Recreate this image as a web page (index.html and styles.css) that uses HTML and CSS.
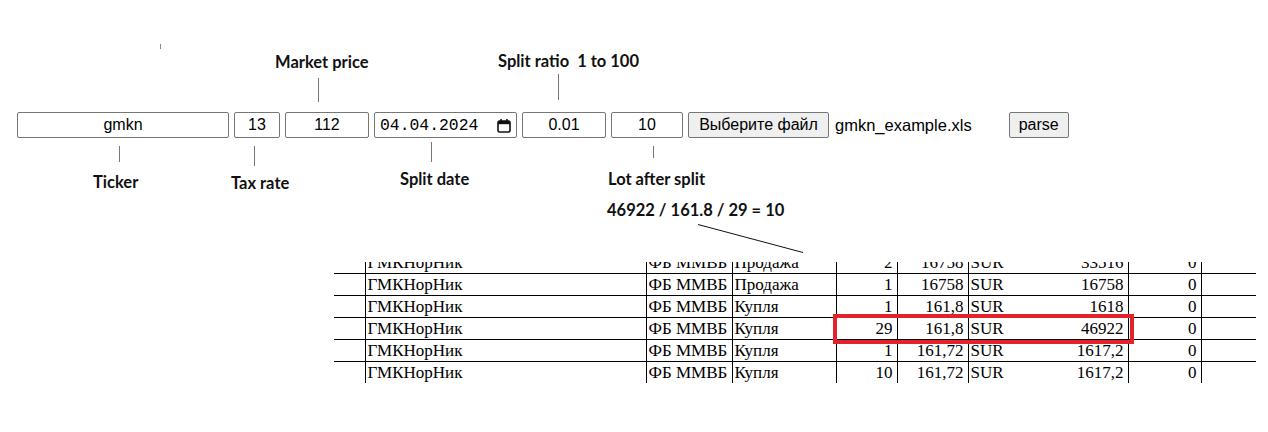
FILE: index.html
```html
<!DOCTYPE html>
<html>
<head>
<meta charset="utf-8">
<link rel="stylesheet" href="styles.css">
</head>
<body>
<div class="canvas">
  <div class="tick"></div>

  <div class="note note-market">Market price</div>
  <div class="vline vl-market"></div>
  <div class="note note-ratio">Split ratio&nbsp; 1 to 100</div>
  <div class="vline vl-ratio"></div>

  <form class="controls">
    <input class="field f-ticker" type="text" value="gmkn">
    <input class="field f-tax" type="text" value="13">
    <input class="field f-price" type="text" value="112">
    <div class="field f-date">
      <span class="date-text">04.04.2024</span>
      <svg class="cal" width="14" height="15" viewBox="0 0 14 15"><rect x="1" y="3" width="12" height="11" rx="1.5" fill="none" stroke="#111" stroke-width="1.6"/><rect x="1" y="3" width="12" height="3.2" fill="#111"/><rect x="3.3" y="1" width="1.6" height="3" fill="#111"/><rect x="9.1" y="1" width="1.6" height="3" fill="#111"/></svg>
    </div>
    <input class="field f-ratio" type="text" value="0.01">
    <input class="field f-lot" type="text" value="10">
    <div class="file">
      <button type="button" class="btn">Выберите файл</button>
      <span class="file-name">gmkn_example.xls</span>
    </div>
    <button type="button" class="btn btn-parse">parse</button>
  </form>

  <div class="vline vl-ticker"></div>
  <div class="vline vl-tax"></div>
  <div class="vline vl-date"></div>
  <div class="vline vl-lot"></div>

  <div class="note note-ticker">Ticker</div>
  <div class="note note-tax">Tax rate</div>
  <div class="note note-date">Split date</div>
  <div class="note note-lot">Lot after split</div>
  <div class="note note-formula">46922 / 161.8 / 29 = 10</div>

  <svg class="pointer" width="1268" height="432" viewBox="0 0 1268 432"><line x1="698" y1="224.5" x2="803" y2="252.5" stroke="#111" stroke-width="1"/></svg>

  <div class="sheet">
    <table class="deals">
      <colgroup>
        <col class="c1"><col class="c2"><col class="c3"><col class="c4"><col class="c5"><col class="c6"><col class="c7"><col class="c8"><col class="c9"><col class="c10">
      </colgroup>
      <tbody>
        <tr><td class="first"></td><td>ГМКНорНик</td><td>ФБ ММВБ</td><td>Продажа</td><td class="num">2</td><td class="num">16758</td><td class="cur">SUR</td><td class="num amt">33516</td><td class="num">0</td><td class="last"></td></tr>
        <tr><td class="first"></td><td>ГМКНорНик</td><td>ФБ ММВБ</td><td>Продажа</td><td class="num">1</td><td class="num">16758</td><td class="cur">SUR</td><td class="num amt">16758</td><td class="num">0</td><td class="last"></td></tr>
        <tr><td class="first"></td><td>ГМКНорНик</td><td>ФБ ММВБ</td><td>Купля</td><td class="num">1</td><td class="num">161,8</td><td class="cur">SUR</td><td class="num amt">1618</td><td class="num">0</td><td class="last"></td></tr>
        <tr><td class="first"></td><td>ГМКНорНик</td><td>ФБ ММВБ</td><td>Купля</td><td class="num">29</td><td class="num">161,8</td><td class="cur">SUR</td><td class="num amt">46922</td><td class="num">0</td><td class="last"></td></tr>
        <tr><td class="first"></td><td>ГМКНорНик</td><td>ФБ ММВБ</td><td>Купля</td><td class="num">1</td><td class="num">161,72</td><td class="cur">SUR</td><td class="num amt">1617,2</td><td class="num">0</td><td class="last"></td></tr>
        <tr><td class="first"></td><td>ГМКНорНик</td><td>ФБ ММВБ</td><td>Купля</td><td class="num">10</td><td class="num">161,72</td><td class="cur">SUR</td><td class="num amt">1617,2</td><td class="num">0</td><td class="last"></td></tr>
      </tbody>
    </table>
  </div>
  <div class="highlight"></div>
</div>
</body>
</html>
```

FILE: styles.css
```css
html, body {
  margin: 0;
  padding: 0;
  background: #fff;
}

.canvas {
  position: relative;
  width: 1268px;
  height: 432px;
  overflow: hidden;
  background: #fff;
  font-family: "Liberation Sans", Arial, sans-serif;
}

/* annotation layer */
.note {
  position: absolute;
  font-family: Lato, "Open Sans", sans-serif;
  font-weight: 700;
  font-size: 16.5px;
  line-height: 18px;
  color: #111;
  white-space: nowrap;
}
.note-market { left: 275px; top: 53px; }
.note-ratio { left: 498px; top: 52px; }
.note-ticker { left: 93px; top: 173px; }
.note-tax { left: 231px; top: 174px; }
.note-date { left: 400px; top: 170px; }
.note-lot { left: 608px; top: 170px; }
.note-formula { left: 607px; top: 201px; }

.vline {
  position: absolute;
  width: 1px;
  background: #777;
}
.vl-market { left: 318px; top: 78px; height: 24px; }
.vl-ratio { left: 558px; top: 74px; height: 26px; }
.vl-ticker { left: 119px; top: 146px; height: 16px; }
.vl-tax { left: 254px; top: 146px; height: 20px; }
.vl-date { left: 431px; top: 142px; height: 20px; }
.vl-lot { left: 653px; top: 146px; height: 12px; }

.tick {
  position: absolute;
  left: 160px;
  top: 44px;
  width: 1px;
  height: 5px;
  background: #888;
}

.pointer {
  position: absolute;
  left: 0;
  top: 0;
  pointer-events: none;
}

/* form row */
.controls {
  display: flex;
  align-items: center;
  gap: 5px;
  margin: 0;
  padding: 112px 0 0 17px;
  height: 26px;
}

.field {
  box-sizing: border-box;
  height: 26px;
  margin: 0;
  border: 1px solid #767676;
  border-radius: 2px;
  background: #fff;
  font-family: "Liberation Sans", Arial, sans-serif;
  font-size: 16px;
  color: #000;
  text-align: center;
  padding: 1px 2px;
  outline: none;
}
.f-ticker { width: 212px; }
.f-tax { width: 46px; }
.f-price { width: 84px; }
.f-ratio { width: 84px; }
.f-lot { width: 72px; }

.f-date {
  width: 143px;
  display: flex;
  align-items: center;
  justify-content: space-between;
  padding: 0 5px 0 5px;
  text-align: left;
}
.date-text {
  font-family: "Liberation Mono", "DejaVu Sans Mono", monospace;
  font-size: 16.4px;
  letter-spacing: 0;
  color: #000;
}
.cal {
  display: block;
  margin-top: 1px;
}

.file {
  display: flex;
  align-items: center;
  gap: 6px;
}

.btn {
  box-sizing: border-box;
  height: 26px;
  margin: 0;
  padding: 1px 8px;
  border: 1px solid #767676;
  border-radius: 2px;
  background: #efefef;
  font-family: "Liberation Sans", Arial, sans-serif;
  font-size: 16px;
  color: #000;
}
.file .btn { width: 141px; }
.file-name {
  font-size: 16.5px;
  color: #000;
}
.btn-parse {
  width: 60px;
  margin-left: 32px;
  padding: 1px 6px;
}

/* spreadsheet fragment */
.sheet {
  margin: 124px 0 0 334px;
  width: 922px;
  height: 121px;
  overflow: hidden;
}
.deals {
  margin-top: -11px;
  border-collapse: collapse;
  table-layout: fixed;
  width: 922px;
  font-family: "Liberation Serif", "Times New Roman", serif;
  font-size: 17px;
  color: #000;
}
.c1 { width: 31px; }
.c2 { width: 281px; }
.c3 { width: 86px; }
.c4 { width: 104px; }
.c5 { width: 61px; }
.c6 { width: 71px; }
.c7 { width: 67px; }
.c8 { width: 93px; }
.c9 { width: 73px; }
.c10 { width: 55px; }

.deals td {
  height: 21px;
  padding: 0 4px 0 2px;
  border: 1px solid #000;
  line-height: 21px;
  vertical-align: bottom;
  white-space: nowrap;
  overflow: hidden;
}
.deals td.first { border-left: none; }
.deals td.last { border-right: none; }
.deals td.num { text-align: right; }
.deals td.cur { border-right: none; }
.deals td.amt { border-left: none; }

.highlight {
  position: absolute;
  left: 833px;
  top: 314px;
  width: 301px;
  height: 30px;
  box-sizing: border-box;
  border: 4px solid #e3232c;
}
```
